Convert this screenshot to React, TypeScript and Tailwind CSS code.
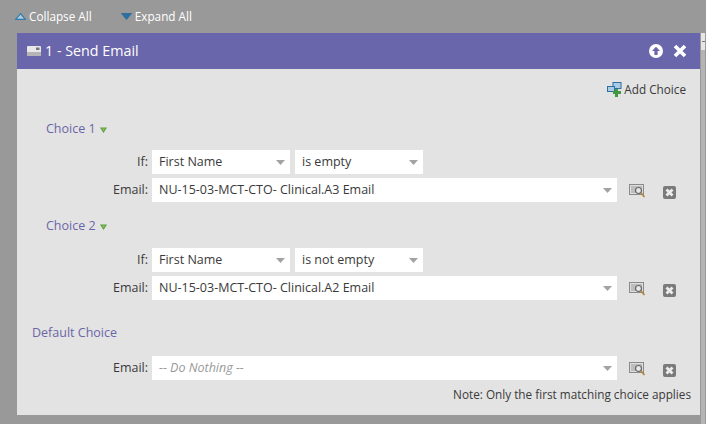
import React from "react";

const Arrow = () => (
  <svg width="7" height="6" viewBox="0 0 7 6" className="ml-[4px] mt-px">
    <path d="M0 0.5 H7 L3.5 6 Z" fill="#5c9e3c" />
    <path d="M2 1.5 H5 L3.5 4 Z" fill="#8cc46a" />
  </svg>
);

const Caret = () => (
  <svg width="9" height="5" viewBox="0 0 9 5" className="shrink-0">
    <path d="M0 0 H9 L4.5 5 Z" fill="#a3a3a3" />
  </svg>
);

const Select = ({ text, className, placeholder }: { text: string; className: string; placeholder?: boolean }) => (
  <div className={`flex h-6 items-center justify-between bg-white pl-[7px] pr-[5px] ${className}`}>
    <span className={placeholder ? "italic text-[#999]" : "text-[#3a3a3a]"}>{text}</span>
    <Caret />
  </div>
);

const PreviewIcon = () => (
  <svg width="17" height="14" viewBox="0 0 17 14" className="ml-[12px] mt-px shrink-0">
    <rect x="0.5" y="0.5" width="14" height="10" fill="#dedede" stroke="#8a8a8a" />
    <rect x="2" y="2" width="11" height="7" fill="#bdbdbd" />
    <circle cx="9.5" cy="6.5" r="3" fill="#e8e8e8" stroke="#666" strokeWidth="1.2" />
    <path d="M12 9 L15.5 13" stroke="#b5843c" strokeWidth="1.6" />
  </svg>
);

const DeleteIcon = () => (
  <svg width="13" height="13" viewBox="0 0 13 13" className="ml-[17px] mt-[4px] shrink-0">
    <rect x="0" y="0" width="13" height="13" rx="2" fill="#7a7a7a" />
    <path d="M3.5 3.5 L9.5 9.5 M9.5 3.5 L3.5 9.5" stroke="#ececec" strokeWidth="2.8" />
  </svg>
);

const EmailRow = ({ text, placeholder }: { text: string; placeholder?: boolean }) => (
  <div className="flex items-center">
    <span className="w-[135px] pr-[4px] text-right text-[#3a3a3a]">Email:</span>
    <Select text={text} placeholder={placeholder} className="w-[465px]" />
    <PreviewIcon />
    <DeleteIcon />
  </div>
);

const IfRow = ({ op }: { op: string }) => (
  <div className="flex items-center">
    <span className="w-[135px] pr-[4px] text-right text-[#3a3a3a]">If:</span>
    <Select text="First Name" className="w-[138px]" />
    <Select text={op} className="ml-[5px] w-[128px]" />
  </div>
);

const ChoiceTitle = ({ label }: { label: string }) => (
  <div className="flex h-[18px] items-center pl-[29px] text-[#6a66a8]">
    {label}
    <Arrow />
  </div>
);

export default function App() {
  return (
    <div
      className="h-[424px] w-[706px] overflow-hidden bg-[#999999] text-[12.5px]"
      style={{ fontFamily: '"Open Sans", sans-serif' }}
    >
      <div className="flex h-[33px] items-center pl-[15px] text-[11.75px] text-white">
        <svg width="11" height="7" viewBox="0 0 11 7">
          <path d="M5.5 0.7 L10.4 6.4 H0.6 Z" fill="#b4c8d8" stroke="#2f7bb0" strokeWidth="1.2" />
        </svg>
        <span className="ml-[3px]">Collapse All</span>
        <svg width="11" height="7" viewBox="0 0 11 7" className="ml-[29px]">
          <path d="M0.5 0.5 H10.5 L5.5 6.5 Z" fill="#2f6f9f" stroke="#2f6f9f" />
        </svg>
        <span className="ml-[3px]">Expand All</span>
      </div>

      <div className="ml-[17px] flex">
        <div className="h-[382px] w-[683px] bg-[#e3e3e3]">
          <div className="flex h-9 items-center bg-[#6a66ab] pl-[10px] pr-[13px] text-white">
            <svg width="14" height="10" viewBox="0 0 14 10">
              <rect width="14" height="10" rx="1" fill="#e8e8e8" />
              <rect y="6" width="14" height="4" fill="#b5b5b5" />
              <rect x="9" y="1.5" width="3.5" height="2.5" fill="#777" />
            </svg>
            <span className="ml-[4px] text-[14.3px]">1 - Send Email</span>
            <svg width="14" height="14" viewBox="0 0 14 14" className="ml-auto">
              <circle cx="7" cy="7" r="7" fill="#fff" />
              <path d="M7 2.8 L11 7 H8.6 V11 H5.4 V7 H3 Z" fill="#6a66ab" />
            </svg>
            <svg width="14" height="14" viewBox="0 0 14 14" className="ml-[10px]">
              <path d="M2 2 L12 12 M12 2 L2 12" stroke="#fff" strokeWidth="3.6" />
            </svg>
          </div>

          <div className="flex h-10 items-center justify-end pr-[14px] pt-[1px] text-[11.75px] text-[#3a3a3a]">
            <svg width="16" height="15" viewBox="0 0 16 15" className="mr-px">
              <rect x="6" y="0.5" width="8" height="6" fill="#a8cbe6" stroke="#2f6f9f" />
              <rect x="0.5" y="4.5" width="7" height="5" fill="#a8cbe6" stroke="#2f6f9f" />
              <path d="M8 7 H11 V9 H14 V12 H11 V15 H8 V12 H6 V9 H8 Z" fill="#3f9a3f" />
            </svg>
            Add Choice
          </div>

          <div className="mt-[11px]">
            <ChoiceTitle label="Choice 1" />
            <div className="mt-3 flex flex-col gap-1">
              <IfRow op="is empty" />
              <EmailRow text="NU-15-03-MCT-CTO- Clinical.A3 Email" />
            </div>
          </div>

          <div className="mt-[15px]">
            <ChoiceTitle label="Choice 2" />
            <div className="mt-[13px] flex flex-col gap-1">
              <IfRow op="is not empty" />
              <EmailRow text="NU-15-03-MCT-CTO- Clinical.A2 Email" />
            </div>
          </div>

          <div className="mt-[24px] flex h-[18px] items-center pl-[15px] text-[#6a66a8]">Default Choice</div>
          <div className="mt-[14px]">
            <EmailRow text="-- Do Nothing --" placeholder />
          </div>
          <div className="mt-[6px] pr-[9px] text-right text-[11.75px] text-[#3a3a3a]">
            Note: Only the first matching choice applies
          </div>
        </div>

        {/* scrollbar strip at the right edge */}
        <div className="ml-px flex h-[391px] w-[4px] flex-col">
          <div className="flex h-[17px] items-center justify-center bg-[#e6e6e6]">
            <div className="h-px w-[3px] bg-[#777]" />
          </div>
          <div className="flex-1 bg-[#b4b4b4]" />
        </div>
      </div>
    </div>
  );
}
